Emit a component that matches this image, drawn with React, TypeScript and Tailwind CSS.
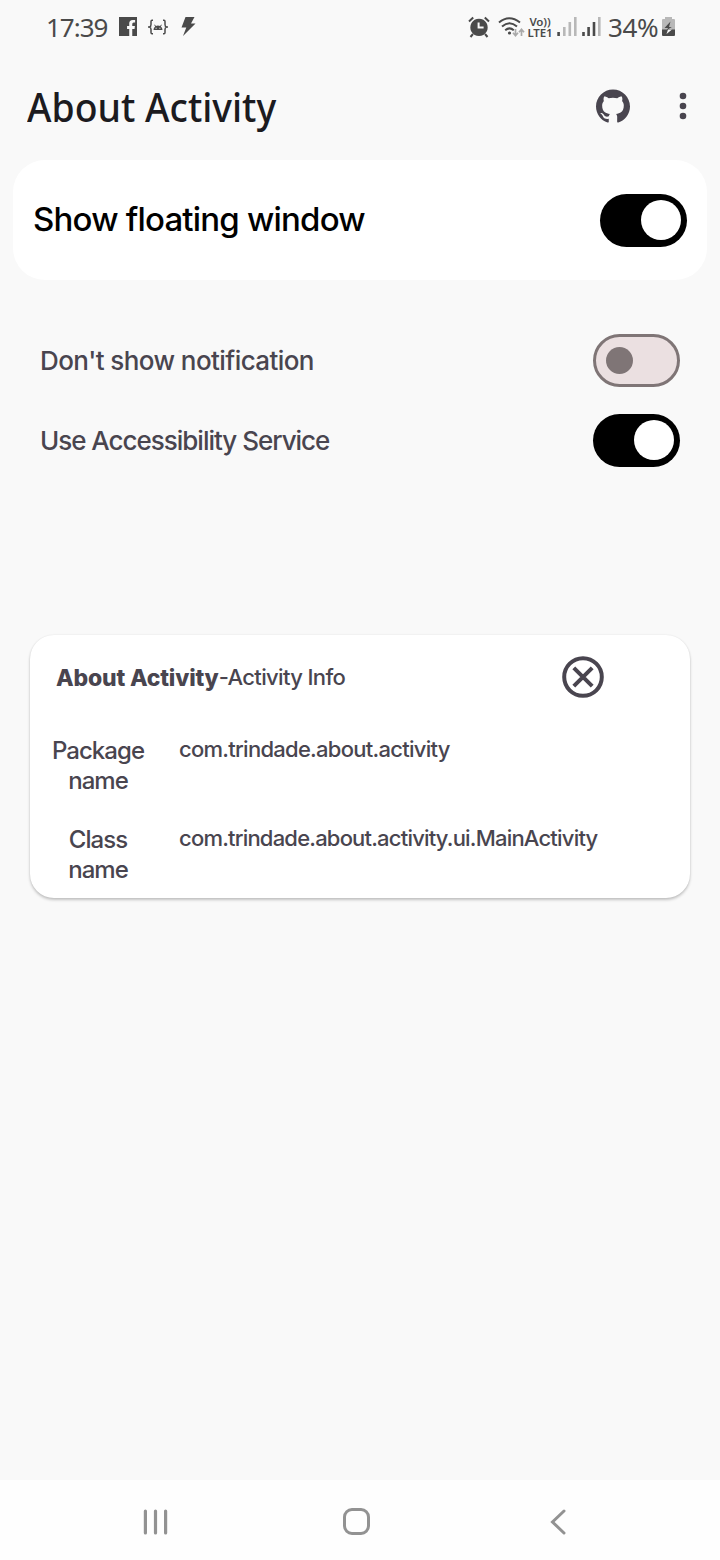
const GITHUB =
  "M12 .297c-6.63 0-12 5.373-12 12 0 5.303 3.438 9.8 8.205 11.385.6.113.82-.258.82-.577 0-.285-.01-1.04-.015-2.04-3.338.724-4.042-1.61-4.042-1.61C4.422 18.07 3.633 17.7 3.633 17.7c-1.087-.744.084-.729.084-.729 1.205.084 1.838 1.236 1.838 1.236 1.07 1.835 2.809 1.305 3.495.998.108-.776.417-1.305.76-1.605-2.665-.3-5.466-1.332-5.466-5.93 0-1.31.465-2.38 1.235-3.22-.135-.303-.54-1.523.105-3.176 0 0 1.005-.322 3.3 1.23.96-.267 1.98-.399 3-.405 1.02.006 2.04.138 3 .405 2.28-1.552 3.285-1.23 3.285-1.23.645 1.653.24 2.873.12 3.176.765.84 1.23 1.91 1.23 3.22 0 4.61-2.805 5.625-5.475 5.92.42.36.81 1.096.81 2.22 0 1.606-.015 2.896-.015 3.286 0 .315.21.69.825.57C20.565 22.092 24 17.592 24 12.297c0-6.627-5.373-12-12-12";

function Toggle({ on }: { on: boolean }) {
  return on ? (
    <button role="switch" aria-checked="true" className="flex h-[53px] w-[87px] shrink-0 items-center justify-end rounded-full bg-black pr-[6px]">
      <span className="size-10 rounded-full bg-white" />
    </button>
  ) : (
    <button role="switch" aria-checked="false" className="flex h-[53px] w-[87px] shrink-0 items-center rounded-full border-[3px] border-[#7f7576] bg-[#ebe0e1] pl-[10px]">
      <span className="size-[27px] rounded-full bg-[#7f7576]" />
    </button>
  );
}

function SettingRow({ label, on, tracking }: { label: string; on: boolean; tracking: string }) {
  return (
    <div className="flex h-20 items-center justify-between px-10">
      <span className={`text-[26px] font-[450] ${tracking}`}>{label}</span>
      <Toggle on={on} />
    </div>
  );
}

function InfoRow({ label, value, tracking }: { label: string; value: string; tracking: string }) {
  return (
    <div className="flex h-[89px] items-start">
      <span className="mt-px w-[136px] px-5 text-center text-[24px] leading-[30px] font-[450] tracking-[-0.95px]">{label}</span>
      <span className={`ml-[13px] text-[22px] leading-[28px] font-[450] whitespace-nowrap ${tracking}`}>{value}</span>
    </div>
  );
}

function StatusBar() {
  return (
    <div className="flex h-[54px] shrink-0 items-center justify-between pr-[45px] pb-px pl-[46px] font-['Noto_Sans',sans-serif] text-[#4a4a4a]">
      <div className="flex items-center">
        <span className="w-[73px] text-[26px] leading-[52px] tracking-[-1px]">17:39</span>
        <svg width="18" height="19" viewBox="0 0 19 19" preserveAspectRatio="none" fill="currentColor">
          <path fillRule="evenodd" d="M0 0h19v19h-5v-7h2.400l.4-3H14V7q0-1.500 1.500-1.500H17V3h-2.500Q10.800 3 10.800 6.500V9H8.500v3h2.300v7H0z" />
        </svg>
        <svg className="ml-[11px]" width="20" height="16" viewBox="0 0 20 16" fill="none" stroke="currentColor" strokeWidth="1.500">
          <path d="M5 1.200H4Q3 1.200 3 2.500v3Q3 7.500 1.500 8H0h1.500Q3 8.500 3 10.500v3q0 1.300 1 1.300h1M15 1.200h1q1 0 1 1.300v3Q17 7.500 18.500 8H20h-1.500Q17 8.500 17 10.500v3q0 1.300-1 1.300h-1" />
          <path fill="currentColor" stroke="none" fillRule="evenodd" d="M5.500 11a4.500 4.500 0 0 1 1.700-3.600l-1-1.500.6-.4 1.100 1.500q2-.8 4.200 0l1.100-1.500.6.4-1 1.500A4.500 4.500 0 0 1 14.500 11zM7.600 8.800v1h1v-1zm3.800 0v1h1v-1z" />
        </svg>
        <svg className="ml-[13px]" width="15" height="19" viewBox="0 0 15 19" fill="currentColor">
          <path d="M4.500 0h9l-3.500 6.500h4.500L2 19l3.300-8.500H0.500z" />
        </svg>
      </div>
      <div className="flex items-center">
        <svg width="22" height="22" viewBox="0 0 22 22" fill="none" stroke="currentColor" strokeWidth="2">
          <path fill="currentColor" stroke="none" fillRule="evenodd" d="M11 2.700a8.700 8.700 0 1 0 .01 0zM9.600 6.500v6h6v-2h-4v-4z" />
          <path d="M1 5.500 5.200 1.500M21 5.500 16.800 1.500M5 18l-2.500 3M17 18l2.500 3" />
        </svg>
        <svg className="ml-[8px]" width="28" height="22" viewBox="0 0 28 22" fill="none">
          <path d="M1 6.500q10-8.500 21 0M4 10.500q7.500-6.500 15 0M7.200 14.200q4.300-3.600 8.600 0" stroke="#4a4a4a" strokeWidth="2" />
          <circle cx="11.500" cy="17" r="1.600" fill="#4a4a4a" />
          <path d="M17.500 13v6.500m-2.500-2.700 2.500 2.900 2.500-2.900M23.500 20v-6.500m-2.500 2.700 2.500-2.900 2.500 2.900" stroke="#aaa" strokeWidth="1.700" />
        </svg>
        <span className="ml-px w-[26px] text-center font-['Noto_Sans',sans-serif] text-[11.5px] leading-[11px] font-semibold tracking-[-0.1px]">
          Vo)) LTE1
        </span>
        <svg className="ml-[4px]" width="44" height="19" viewBox="0 0 44 19" stroke="#b8b8b8" strokeWidth="2.600">
          <path d="M7.300 19v-9M12.800 19V5M18.300 19V0M42.300 19V0" />
          <path d="M1.600 19v-4M26.500 19v-4M31.600 19v-9M37 19V5" stroke="#4a4a4a" />
        </svg>
        <span className="ml-[7px] w-[54px] text-[26px] leading-[52px] tracking-[-0.4px]">34%</span>
        <svg width="13" height="19" viewBox="0 0 13 19">
          <path d="M3 0h7v2h2q1 0 1 1v10H0V3q0-1 1-1h2z" fill="#b8b8b8" />
          <path d="M0 12.500h13V18q0 1-1 1H1q-1 0-1-1z" fill="#4a4a4a" />
          <path d="M8.500 4.500 2.500 11H6l-1 2h5L6.500 12l3.300-2H7z" fill="#4a4a4a" />
          <path d="M6 12.500h4L4.500 17z" fill="#f9f9f9" />
        </svg>
      </div>
    </div>
  );
}

export default function App() {
  return (
    <div className="flex h-[1560px] w-[720px] flex-col overflow-hidden bg-[#f9f9f9] font-[Inter,sans-serif] text-[#49454f]">
      <StatusBar />
      <header className="flex h-[106px] shrink-0 items-center justify-between pr-[33px] pl-[27px]">
        <h1 className="origin-left scale-x-[0.935] font-['Noto_Sans',sans-serif] text-[40px] leading-[106px] font-medium text-[#1c1b1f]">About Activity</h1>
        <div className="flex items-center gap-[49px] pb-[3px]">
          <svg width="34" height="34" viewBox="0 0 24 24" fill="currentColor"><path d={GITHUB} /></svg>
          <svg width="8" height="28" viewBox="0 0 8 28" fill="currentColor">
            <circle cx="4" cy="4" r="3.300" />
            <circle cx="4" cy="14" r="3.300" />
            <circle cx="4" cy="24" r="3.300" />
          </svg>
        </div>
      </header>
      <main className="flex flex-1 flex-col">
        <section className="mx-[13px] flex h-[120px] items-center justify-between rounded-[32px] bg-white px-5">
          <span className="text-[33px] font-medium tracking-[-0.8px] text-black">Show floating window</span>
          <Toggle on />
        </section>
        <section className="mt-10">
          <SettingRow label="Don't show notification" on={false} tracking="tracking-[-0.58px]" />
          <SettingRow label="Use Accessibility Service" on tracking="tracking-[-1.02px]" />
        </section>
        <section className="mx-[30px] mt-[155px] h-[263px] rounded-[24px] bg-white shadow-[0_2px_3px_rgba(0,0,0,0.22),0_0_2px_rgba(0,0,0,0.08)]">
          <div className="flex h-[100px] items-start pt-[21px] pl-[26px]">
            <div className="flex w-[506px] items-start leading-[42px]">
              <span className="pt-px text-[23px] font-extrabold tracking-[-0.18px]">About Activity</span>
              <span className="text-[22px] font-[450] tracking-[-0.64px]">-Activity Info</span>
            </div>
            <svg width="42" height="42" viewBox="0 0 42 42" fill="none" stroke="currentColor" strokeWidth="4">
              <circle cx="21" cy="21" r="18.800" />
              <path d="m11.800 11.800 18.400 18.400M30.200 11.800 11.800 30.200" />
            </svg>
          </div>
          <InfoRow label="Package name" value="com.trindade.about.activity" tracking="tracking-[-0.73px]" />
          <InfoRow label="Class name" value="com.trindade.about.activity.ui.MainActivity" tracking="tracking-[-0.8px]" />
        </section>
      </main>
      <nav className="flex h-20 shrink-0 items-center bg-[#fefefe] pt-[3px] pl-[143px] text-[#929292]">
        <svg width="25" height="26" viewBox="0 0 25 26" stroke="currentColor" strokeWidth="3.200" strokeLinecap="round">
          <path d="M2.400 2v22M12.500 2v22M22.600 2v22" />
        </svg>
        <svg className="ml-[175px]" width="27" height="27" viewBox="0 0 27 27" fill="none" stroke="currentColor" strokeWidth="3">
          <rect x="1.500" y="1.500" width="24" height="24" rx="7.500" />
        </svg>
        <svg className="ml-[180px]" width="16" height="26" viewBox="0 0 16 26" fill="none" stroke="currentColor" strokeWidth="3" strokeLinecap="round">
          <path d="M14 2 2.500 13 14 24" />
        </svg>
      </nav>
    </div>
  );
}
